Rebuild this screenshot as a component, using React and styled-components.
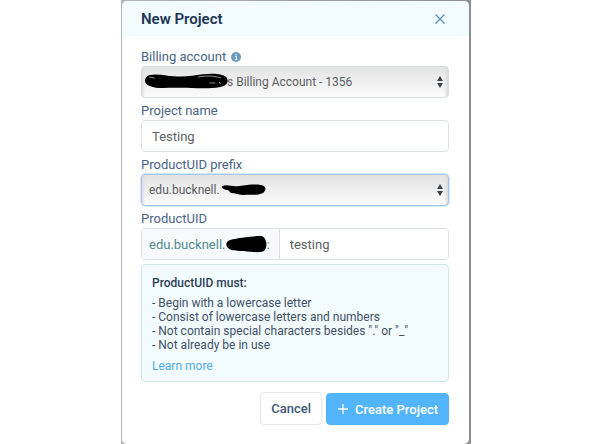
import React, { useState } from 'react';
import styled, { createGlobalStyle } from 'styled-components';

const GlobalStyle = createGlobalStyle`
  *, *::before, *::after {
    box-sizing: border-box;
  }

  body {
    margin: 0;
    background: #fff;
    font-family: Roboto, "Liberation Sans", sans-serif;
    color: #3f5068;
  }

  button, input, select {
    font: inherit;
  }
`;

const Backdrop = styled.div`
  max-width: 350px;
  margin: 0 auto;
  padding: 1px 2px 0 1px;
  background: linear-gradient(90deg, #b4b4b8, #8e8e92);
`;

const Modal = styled.form`
  background: #fff;
  border-radius: 5px;
  overflow: hidden;
`;

const Header = styled.header`
  display: flex;
  align-items: center;
  justify-content: space-between;
  height: 35px;
  padding: 0 23px 0 19px;
  background: #f2fbfe;
`;

const Title = styled.h1`
  margin: 0;
  font-size: 15px;
  font-weight: 600;
  line-height: 20px;
  color: #1c3553;
`;

const CloseButton = styled.button`
  display: flex;
  padding: 0;
  border: 0;
  background: none;
  cursor: pointer;
`;

const Body = styled.div`
  padding: 8px 20px 19px 19px;
`;

const LabelRow = styled.div`
  display: flex;
  align-items: center;
  gap: 5px;
  height: 22px;
  padding-top: 4px;
`;

const Label = styled.label`
  font-size: 13px;
  line-height: 18px;
  color: #486484;
`;

const SelectWrapper = styled.div`
  position: relative;
  display: flex;
`;

const Select = styled.select`
  appearance: none;
  width: 100%;
  height: 32px;
  padding: 0 24px 0 ${({ $indent }) => $indent || '7px'};
  border: 1px solid ${({ $active }) => ($active ? '#a3c4ef' : '#d5dce3')};
  border-radius: 4px;
  background:
    linear-gradient(270deg, #dadada, transparent 4px),
    linear-gradient(90deg, #dddddd, transparent 3px),
    linear-gradient(#e3e3e3, #fbfbfb);
  box-shadow: ${({ $active }) => ($active ? '0 0 0 1px #dbe8fa' : 'none')};
  font-size: 12px;
  color: #5b5e64;
  outline: none;
`;

const SelectArrows = styled.svg`
  position: absolute;
  top: 10px;
  right: 6px;
  pointer-events: none;
`;

const Scribble = styled.svg`
  position: absolute;
  top: ${({ $top }) => $top};
  left: ${({ $left }) => $left};
  pointer-events: none;
`;

const Input = styled.input`
  width: 100%;
  height: 32px;
  padding: 0 10px;
  border: 1px solid #dce1e6;
  border-radius: 4px;
  background: #fff;
  font-size: 13px;
  color: #5b5e64;
  outline: none;
`;

const InputGroup = styled.div`
  display: flex;
  height: 32px;
  border: 1px solid #dce1e6;
  border-radius: 4px;
  overflow: hidden;

  ${Input} {
    flex: 1;
    min-width: 0;
    height: 100%;
    border: 0;
    border-radius: 0;
  }
`;

const Prefix = styled.span`
  display: flex;
  align-items: center;
  flex: 0 0 45%;
  padding-left: 7px;
  border-right: 1px solid #dce1e6;
  background: #f8f9fa;
  font-size: 13px;
  color: #4f8b92;
`;

const Hint = styled.section`
  margin-top: 4px;
  padding: 11px 10px 8px;
  border: 1px solid #cfe7ea;
  border-radius: 4px;
  background: #f2fbfd;
  font-size: 12px;
  line-height: 14px;
`;

const HintTitle = styled.h2`
  margin: 0 0 6px;
  font-size: 12px;
  font-weight: 500;
  line-height: 14px;
  color: #2d4058;
`;

const Rules = styled.ul`
  margin: 0 0 7px;
  padding: 0;
  list-style: none;

  li::before {
    content: "- ";
  }
`;

const LearnMore = styled.a`
  display: block;
  color: #4dabe8;
  text-decoration: none;
`;

const Footer = styled.footer`
  display: flex;
  justify-content: flex-end;
  align-items: flex-end;
  gap: 4px;
  margin-top: 10px;
`;

const Button = styled.button`
  display: flex;
  align-items: center;
  justify-content: center;
  height: 33px;
  padding: 0 10px;
  border: 1px solid #e5e8eb;
  border-radius: 4px;
  background: #fff;
  font-size: 13px;
  font-weight: 500;
  color: #40587a;
  cursor: pointer;
`;

const PrimaryButton = styled(Button)`
  gap: 6px;
  height: 32px;
  border-color: #52b4fa;
  background: #52b4fa;
  color: #fff;
`;

const Arrows = () => (
  <SelectArrows width="6" height="12" viewBox="0 0 6 12" aria-hidden="true">
    <path d="M3 0 6 5H0ZM0 7h6L3 12Z" fill="#3d4248" />
  </SelectArrows>
);

const InfoIcon = () => (
  <svg width="10" height="10" viewBox="0 0 10 10" aria-hidden="true">
    <circle cx="5" cy="5" r="5" fill="#6e9abf" />
    <path d="M4 4.3h1.4v3M3.9 7.4h2.4" stroke="#fff" strokeWidth="0.9" fill="none" />
    <circle cx="5" cy="2.5" r="0.7" fill="#fff" />
  </svg>
);

const rules = [
  'Begin with a lowercase letter',
  'Consist of lowercase letters and numbers',
  'Not contain special characters besides "." or "_"',
  'Not already be in use'
];

const App = () => {
  const [name, setName] = useState('Testing');
  const [uid, setUid] = useState('testing');

  return (
    <>
      <GlobalStyle />
      <Backdrop>
        <Modal onSubmit={(e) => e.preventDefault()}>
          <Header>
            <Title>New Project</Title>
            <CloseButton type="button" aria-label="Close">
              <svg width="12" height="12" viewBox="0 0 12 12">
                <path d="M1.5 1.5l9 9M10.5 1.5l-9 9" stroke="#5f8db8" strokeWidth="1.3" />
              </svg>
            </CloseButton>
          </Header>
          <Body>
            <LabelRow>
              <Label htmlFor="billing">Billing account</Label>
              <InfoIcon />
            </LabelRow>
            <SelectWrapper>
              <Select id="billing" $indent="85px">
                <option>s Billing Account - 1356</option>
              </Select>
              <Scribble $top="7px" $left="3px" width="86" height="18" viewBox="0 0 88 18" aria-hidden="true">
                <path
                  d="M5 2C15 0 22 3 31 3C43 4 51 2 60 1C70 0 80 0 84 4C88 9 84 13 78 14C62 17 45 14 31 15C21 15 12 16 6 13C0 11-1 5 5 2Z"
                  fill="#000"
                />
                <path d="M5 4l6 1M55 4C64 2 74 3 79 5M67 10h6M77 9l1 2" stroke="#b5b5b5" strokeWidth="0.8" fill="none" />
              </Scribble>
              <Arrows />
            </SelectWrapper>

            <LabelRow>
              <Label htmlFor="name">Project name</Label>
            </LabelRow>
            <Input id="name" value={name} onChange={(e) => setName(e.target.value)} />

            <LabelRow>
              <Label htmlFor="prefix">ProductUID prefix</Label>
            </LabelRow>
            <SelectWrapper>
              <Select id="prefix" $active>
                <option>edu.bucknell.</option>
              </Select>
              <Scribble $top="10px" $left="80px" width="46" height="13" viewBox="0 0 46 13" aria-hidden="true">
                <path
                  d="M1 2C7 0 11 3 18 2C26 1 33 0 40 1C45 2 46 6 42 9C36 12 29 10 23 11C18 11 14 9 10 9L7 6C4 6 0 4 1 2Z"
                  fill="#000"
                />
              </Scribble>
              <Arrows />
            </SelectWrapper>

            <LabelRow>
              <Label htmlFor="uid">ProductUID</Label>
            </LabelRow>
            <InputGroup>
              <Prefix>
                edu.bucknell.
                <svg width="41" height="17" viewBox="0 0 41 17" aria-hidden="true">
                  <path
                    d="M1 6C4 3 9 3 14 2C21 1 28 0 35 0C41 1 42 11 38 15C34 17 25 16 18 15C12 15 5 15 2 12C0 10 0 8 1 6Z"
                    fill="#000"
                  />
                </svg>
                :
              </Prefix>
              <Input id="uid" value={uid} onChange={(e) => setUid(e.target.value)} />
            </InputGroup>

            <Hint>
              <HintTitle>ProductUID must:</HintTitle>
              <Rules>
                {rules.map((rule) => (
                  <li key={rule}>{rule}</li>
                ))}
              </Rules>
              <LearnMore href="#">Learn more</LearnMore>
            </Hint>

            <Footer>
              <Button type="button">Cancel</Button>
              <PrimaryButton type="submit">
                <svg width="12" height="12" viewBox="0 0 12 12" aria-hidden="true">
                  <path d="M6 1v10M1 6h10" stroke="#fff" strokeWidth="1.3" />
                </svg>
                Create Project
              </PrimaryButton>
            </Footer>
          </Body>
        </Modal>
      </Backdrop>
    </>
  );
};

export default App;
